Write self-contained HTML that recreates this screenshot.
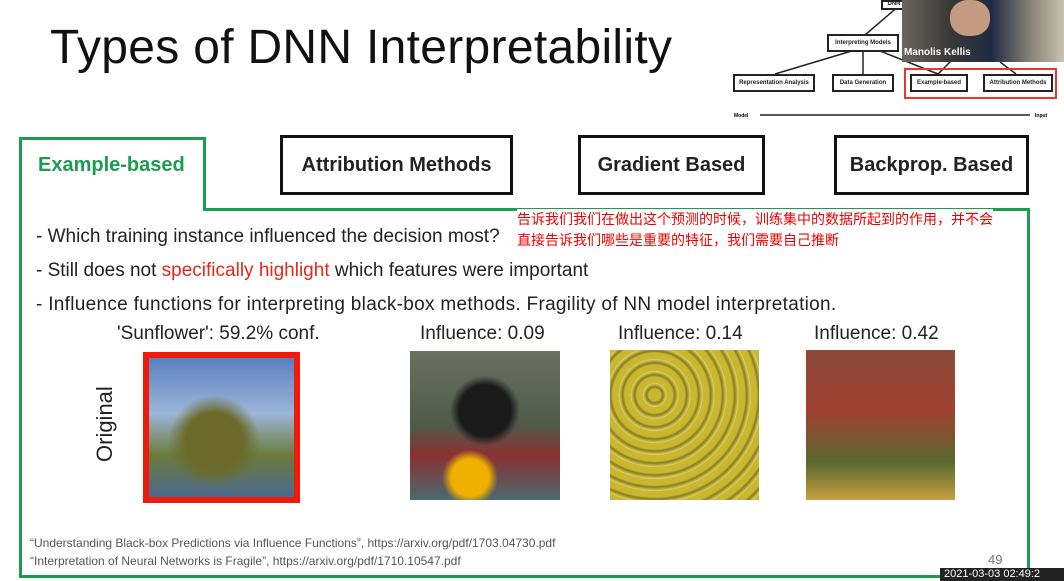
<!DOCTYPE html>
<html><head><meta charset="utf-8"><style>
*{margin:0;padding:0;box-sizing:border-box}
body{width:1064px;height:581px;background:#fff;position:relative;overflow:hidden;font-family:"Liberation Sans","Noto Sans CJK SC",sans-serif;color:#222}
.a{position:absolute}
.tab{position:absolute;border:3px solid #111;background:#fff;font-weight:bold;font-size:20px;text-align:center;line-height:54px;height:60px;top:135px}
.sm{position:absolute;border:2px solid #222;font-size:6px;font-weight:bold;text-align:center;background:#fff;line-height:14px;height:18px}
.bul{position:absolute;left:36px;font-size:19px;color:#222}
.cap{position:absolute;font-size:19px;color:#222}
</style></head><body>
<div class="a" style="left:50px;top:20px;font-size:48px;letter-spacing:0.3px;color:#111">Types of DNN Interpretability</div>

<svg class="a" style="left:720px;top:0" width="344" height="130">
<g stroke="#222" stroke-width="1.5" fill="none">
<line x1="180" y1="5" x2="145" y2="35"/><line x1="145" y1="47" x2="55" y2="74"/><line x1="143" y1="47" x2="143" y2="74"/>
<line x1="150" y1="47" x2="218" y2="74"/><line x1="230" y1="62" x2="218" y2="74"/><line x1="280" y1="62" x2="296" y2="74"/>
<line x1="40" y1="115" x2="310" y2="115"/>
</g>
<text x="14" y="117" font-size="5" font-weight="bold" font-family="Liberation Sans">Model</text>
<text x="315" y="117" font-size="5" font-weight="bold" font-family="Liberation Sans">Input</text>
</svg>
<div class="sm" style="left:881px;top:0;width:26px;height:10px;line-height:4px">DNN</div>
<div class="sm" style="left:827px;top:34px;width:72px">Interpreting Models</div>
<div class="sm" style="left:733px;top:74px;width:82px">Representation Analysis</div>
<div class="sm" style="left:832px;top:74px;width:62px">Data Generation</div>
<div class="a" style="left:904px;top:68px;width:153px;height:31px;border:2px solid #e33"></div>
<div class="sm" style="left:910px;top:74px;width:58px">Example-based</div>
<div class="sm" style="left:983px;top:74px;width:70px">Attribution Methods</div>
<div class="a" style="left:902px;top:0;width:162px;height:62px;background:linear-gradient(90deg,#6a6560 0%,#3a3836 30%,#1f2a44 55%,#8a8578 80%,#c9c2b0 100%)"></div>
<div class="a" style="left:950px;top:0;width:40px;height:36px;border-radius:45%;background:#c49a80"></div>
<div class="a" style="left:904px;top:47px;color:#fff;font-size:10px;font-weight:bold">Manolis Kellis</div>

<div class="a" style="left:19px;top:208px;width:1011px;height:370px;border:3px solid #1f9a4f"></div>
<div class="a" style="left:19px;top:137px;width:187px;height:74px;border:3px solid #1f9a4f;border-bottom:none;background:#fff"></div>
<div class="a" style="left:38px;top:154px;font-size:20px;font-weight:bold;color:#1f9a4f">Example-based</div>
<div class="tab" style="left:280px;width:233px">Attribution Methods</div>
<div class="tab" style="left:578px;width:187px">Gradient Based</div>
<div class="tab" style="left:834px;width:195px">Backprop. Based</div>

<div class="bul" style="top:226px">- Which training instance influenced the decision most?</div>
<div class="bul" style="top:260px">- Still does not <span style="color:#e02a1a">specifically highlight</span> which features were important</div>
<div class="bul" style="top:294px;letter-spacing:0.3px">- Influence functions for interpreting black-box methods. Fragility of NN model interpretation.</div>
<div class="a" style="left:517px;top:209px;font-size:14px;line-height:21px;color:#e00;background:#fff;white-space:nowrap">告诉我们我们在做出这个预测的时候，训练集中的数据所起到的作用，并不会<br>直接告诉我们哪些是重要的特征，我们需要自己推断</div>

<div class="cap" style="left:117px;top:323px">'Sunflower': 59.2% conf.</div>
<div class="cap" style="left:420px;top:323px">Influence: 0.09</div>
<div class="cap" style="left:618px;top:323px">Influence: 0.14</div>
<div class="cap" style="left:814px;top:323px">Influence: 0.42</div>
<div class="a" style="left:92px;top:462px;font-size:22px;transform:rotate(-90deg);transform-origin:0 0">Original</div>

<div class="a" style="left:143px;top:352px;width:157px;height:151px;border:6px solid #f01a0a;background:radial-gradient(circle at 45% 60%,#6b6a2a 0 25%,transparent 40%),linear-gradient(180deg,#5a7fc0 0%,#9cb6d8 40%,#6b7a3a 70%,#4a6a90 100%)"></div>
<div class="a" style="left:410px;top:351px;width:150px;height:149px;background:radial-gradient(circle at 50% 40%,#1a1a1a 0 22%,transparent 30%),radial-gradient(circle at 40% 85%,#f0b000 0 12%,transparent 18%),linear-gradient(180deg,#6b7060 0%,#505a4a 50%,#8a3030 70%,#4a6a70 100%)"></div>
<div class="a" style="left:610px;top:350px;width:149px;height:150px;background:repeating-radial-gradient(circle at 30% 30%,#c8b830 0 6px,#8a7a20 8px,#e6d860 12px)"></div>
<div class="a" style="left:806px;top:350px;width:149px;height:150px;background:linear-gradient(180deg,#8a4a3a 0%,#a04030 40%,#5a6a30 75%,#c8a040 100%)"></div>

<div class="a" style="left:30px;top:534px;font-size:12px;color:#555;line-height:18px">“Understanding Black-box Predictions via Influence Functions”, https://arxiv.org/pdf/1703.04730.pdf<br>“Interpretation of Neural Networks is Fragile”, https://arxiv.org/pdf/1710.10547.pdf</div>
<div class="a" style="left:988px;top:552px;font-size:13px;color:#777">49</div>
<div class="a" style="left:940px;top:568px;width:124px;height:13px;background:#222;color:#fff;font-size:11px;line-height:13px;padding-left:4px;white-space:nowrap">2021-03-03 02:49:2</div>
</body></html>
